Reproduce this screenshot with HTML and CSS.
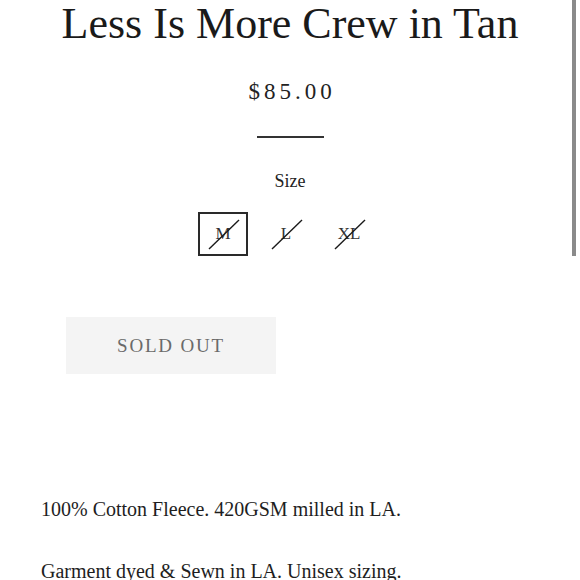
FILE: index.html
```html
<!DOCTYPE html>
<html>
<head>
<meta charset="utf-8">
<link rel="stylesheet" href="styles.css">
</head>
<body>
<main class="product">
  <h1 class="title">Less Is More Crew in Tan</h1>
  <div class="price">$85.00</div>
  <div class="rule"></div>
  <div class="size-label">Size</div>
  <div class="sizes">
    <div class="size selected"><span>M</span><svg class="strike" viewBox="0 0 30 29"><line x1="0" y1="29" x2="30" y2="0"/></svg></div>
    <div class="size"><span>L</span><svg class="strike" viewBox="0 0 30 29"><line x1="0" y1="29" x2="30" y2="0"/></svg></div>
    <div class="size"><span>XL</span><svg class="strike" viewBox="0 0 30 29"><line x1="0" y1="29" x2="30" y2="0"/></svg></div>
  </div>
  <div class="actions">
    <button class="sold-out">SOLD OUT</button>
  </div>
  <div class="description">
    <p>100% Cotton Fleece. 420GSM milled in LA.</p>
    <p>Garment dyed &amp; Sewn in LA. Unisex sizing.</p>
  </div>
</main>
<div class="scroll-thumb"></div>
</body>
</html>
```
FILE: styles.css
```css
html, body {
  margin: 0;
  padding: 0;
  background: #fff;
}
body {
  font-family: "Liberation Serif", "Times New Roman", serif;
  color: #1c1c1c;
  width: 580px;
  height: 580px;
  overflow: hidden;
}
.product {
  display: flex;
  flex-direction: column;
  align-items: center;
}
.title {
  margin: 0;
  padding-top: 4px;
  font-size: 44px;
  line-height: 40px;
  font-weight: normal;
  color: #1a1a1a;
}
.price {
  margin-top: 36px;
  font-size: 23px;
  line-height: 23px;
  letter-spacing: 4px;
  margin-right: -4px;
  color: #222;
}
.rule {
  margin-top: 33px;
  width: 67px;
  height: 2px;
  background: #333;
}
.size-label {
  margin-top: 34px;
  font-size: 18px;
  line-height: 18px;
  color: #222;
}
.sizes {
  margin-top: 22px;
  display: flex;
  gap: 13px;
  margin-right: 8px;
}
.size {
  position: relative;
  width: 50px;
  height: 44px;
  box-sizing: border-box;
  display: flex;
  align-items: center;
  justify-content: center;
  font-size: 17px;
  color: #333;
  border: 2px solid transparent;
}
.size.selected {
  border-color: #2a2a2a;
}
.strike {
  position: absolute;
  left: 9px;
  top: 6px;
  width: 30px;
  height: 29px;
  overflow: visible;
}
.strike line {
  stroke: #1a1a1a;
  stroke-width: 1.4;
}
.actions {
  align-self: stretch;
  padding-left: 66px;
  margin-top: 61px;
}
.sold-out {
  width: 210px;
  height: 57px;
  border: none;
  background: #f4f4f4;
  font-family: "Liberation Serif", "Times New Roman", serif;
  font-size: 19px;
  letter-spacing: 1.8px;
  color: #6a6a6a;
  padding: 0;
}
.description {
  align-self: stretch;
  padding-left: 41px;
  margin-top: 125px;
}
.description p {
  margin: 0 0 42px 0;
  font-size: 20px;
  line-height: 20px;
  color: #1e1e1e;
}
.scroll-thumb {
  position: fixed;
  top: 0;
  left: 572px;
  width: 4px;
  height: 256px;
  background: #8a8a8a;
}
```
